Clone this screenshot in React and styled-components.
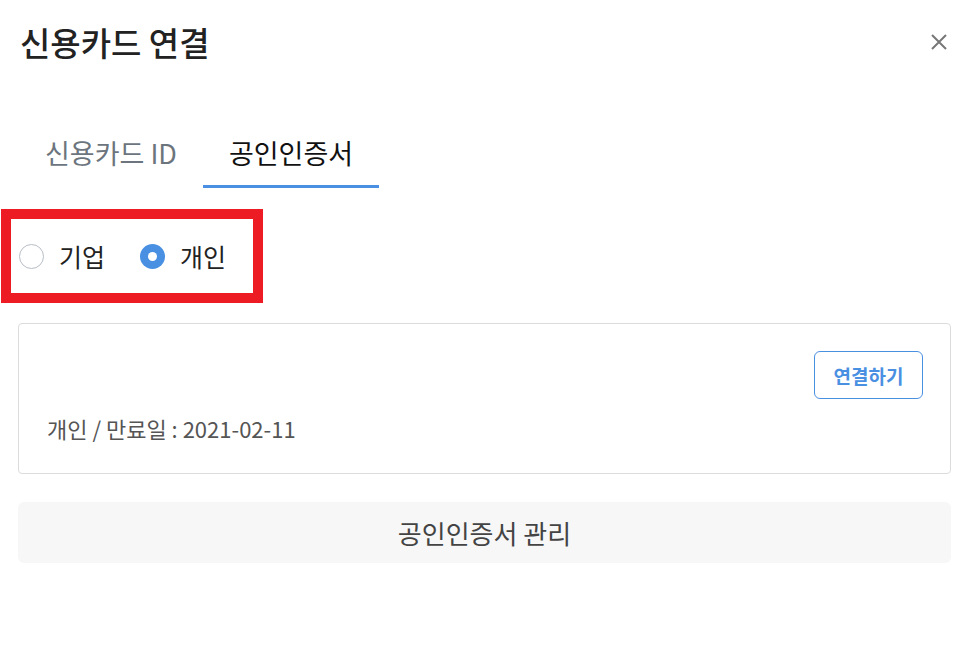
import React, { useState } from 'react';
import styled, { createGlobalStyle, css } from 'styled-components';

const Global = createGlobalStyle`
    * { box-sizing: border-box; }
    body {
        margin: 0;
        background: #fff;
        font-family: "Noto Sans CJK KR", "Noto Sans", sans-serif;
        color: #222;
    }
`

const CardConnect = () => {
    const [tab, setTab] = useState(1);
    const [type, setType] = useState('personal');

    return (
        <Modal>
            <Global />
            <Header>
                <Title>신용카드 연결</Title>
                <CloseBtn aria-label="닫기">
                    <svg width="16" height="16" viewBox="0 0 16 16">
                        <path d="M1 1 L15 15 M15 1 L1 15" stroke="#777" strokeWidth="2" />
                    </svg>
                </CloseBtn>
            </Header>
            <Tabs>
                <Tab active={tab === 0} onClick={() => setTab(0)}>신용카드 ID</Tab>
                <Tab active={tab === 1} onClick={() => setTab(1)}>공인인증서</Tab>
            </Tabs>
            <Highlight>
                <RadioLabel onClick={() => setType('company')}>
                    <Radio checked={type === 'company'} />
                    기업
                </RadioLabel>
                <RadioLabel onClick={() => setType('personal')}>
                    <Radio checked={type === 'personal'} />
                    개인
                </RadioLabel>
            </Highlight>
            <CertCard>
                <ConnectBtn>연결하기</ConnectBtn>
                <CertInfo>개인 / 만료일 : 2021-02-11</CertInfo>
            </CertCard>
            <ManageBtn>공인인증서 관리</ManageBtn>
        </Modal>
    )
}

const Modal = styled.div`
    width: 969px;
    padding: 20px 18px 40px 18px;
`
const Header = styled.div`
    display: flex;
    justify-content: space-between;
    align-items: center;
    padding-left: 2px;
`
const Title = styled.h1`
    margin: 0;
    font-size: 33px;
    line-height: 44px;
    font-weight: 500;
    color: #222;
`
const CloseBtn = styled.button`
    border: none;
    background: none;
    padding: 0;
    margin-right: 4px;
    display: flex;
    cursor: pointer;
`
const Tabs = styled.div`
    display: flex;
    margin-top: 54px;
    padding-left: 1px;
`
const Tab = styled.div`
    padding: 17px 26px 14px;
    font-size: 27px;
    line-height: 36px;
    color: #6c757d;
    border-bottom: 3px solid transparent;
    cursor: pointer;
    ${props => props.active && css`
        color: #111;
        border-bottom-color: #4a90e2;
    `}
`
const Highlight = styled.div`
    display: flex;
    align-items: center;
    gap: 35px;
    width: 262px;
    height: 94px;
    margin: 21px 0 0 -17px;
    padding-left: 8px;
    border: 10px solid #ed1c24;
`
const RadioLabel = styled.label`
    display: flex;
    align-items: center;
    gap: 15px;
    font-size: 25px;
    color: #222;
    cursor: pointer;
`
const Radio = styled.span`
    width: 25px;
    height: 25px;
    border-radius: 50%;
    border: 1px solid #b8bdc6;
    background: #fff;
    display: flex;
    align-items: center;
    justify-content: center;
    ${props => props.checked && css`
        border: none;
        background: #4a90e2;
        &::after {
            content: '';
            width: 9px;
            height: 9px;
            border-radius: 50%;
            background: #fff;
        }
    `}
`
const CertCard = styled.div`
    margin-top: 20px;
    display: flex;
    flex-direction: column;
    padding: 27px 27px 30px 28px;
    border: 1px solid #dcdcdc;
    border-radius: 4px;
`
const ConnectBtn = styled.button`
    align-self: flex-end;
    width: 109px;
    height: 48px;
    border: 1px solid #4a90e2;
    border-radius: 6px;
    background: #fff;
    color: #4a90e2;
    font-family: inherit;
    font-size: 19px;
    font-weight: 700;
    cursor: pointer;
`
const CertInfo = styled.div`
    margin-top: 14px;
    font-size: 22px;
    line-height: 30px;
    color: #555;
`
const ManageBtn = styled.button`
    display: block;
    width: 100%;
    height: 61px;
    margin-top: 28px;
    border: none;
    border-radius: 6px;
    background: #f7f7f7;
    color: #444;
    font-family: inherit;
    font-size: 26px;
    cursor: pointer;
`

export default CardConnect;
